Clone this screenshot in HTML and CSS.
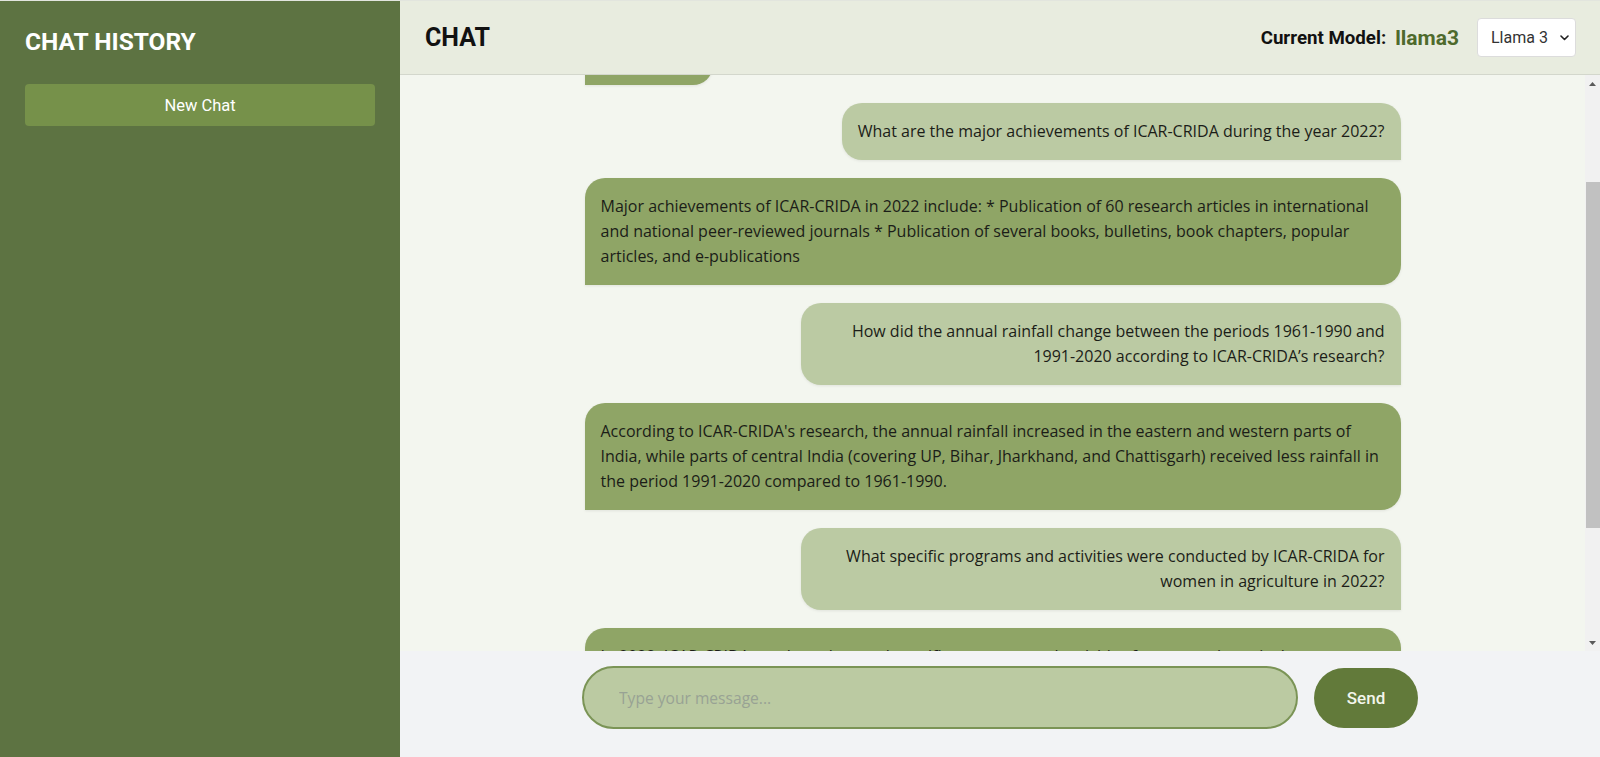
FILE: index.html
```html
<!DOCTYPE html>
<html lang="en">
<head>
<meta charset="utf-8">
<title>Chat</title>
<link rel="stylesheet" href="styles.css">
</head>
<body>
  <aside class="sidebar">
    <h2 class="sidebar-title">CHAT HISTORY</h2>
    <button class="new-chat" type="button">New Chat</button>
  </aside>
  <main class="main">
    <header class="topbar">
      <h1 class="topbar-title">CHAT</h1>
      <div class="model">
        <span class="model-label">Current Model:</span>
        <span class="model-name">llama3</span>
        <span class="select-wrap">
          <select class="model-select">
            <option>Llama 3</option>
          </select>
          <svg class="select-chevron" width="9" height="6" viewBox="0 0 9 6"><path d="M1 1l3.5 3.5L8 1" fill="none" stroke="#222" stroke-width="1.6" stroke-linecap="round" stroke-linejoin="round"/></svg>
        </span>
      </div>
    </header>
    <section class="chat">
      <div class="viewport">
        <div class="thread">
          <div class="msg bot">Hi! Ask away.</div>
          <div class="msg user">What are the major achievements of ICAR-CRIDA during the year 2022?</div>
          <div class="msg bot">Major achievements of ICAR-CRIDA in 2022 include: * Publication of 60 research articles in international and national peer-reviewed journals * Publication of several books, bulletins, book chapters, popular articles, and e-publications</div>
          <div class="msg user">How did the annual rainfall change between the periods 1961-1990 and 1991-2020 according to ICAR-CRIDA’s research?</div>
          <div class="msg bot">According to ICAR-CRIDA's research, the annual rainfall increased in the eastern and western parts of India, while parts of central India (covering UP, Bihar, Jharkhand, and Chattisgarh) received less rainfall in the period 1991-2020 compared to 1961-1990.</div>
          <div class="msg user">What specific programs and activities were conducted by ICAR-CRIDA for women in agriculture in 2022?</div>
          <div class="msg bot">In 2022, ICAR-CRIDA conducted several specific programs and activities for women in agriculture, including trainings, demonstrations and exposure visits for farm women.</div>
        </div>
      </div>
      <div class="scrollbar">
        <div class="sb-btn"><svg width="7" height="4" viewBox="0 0 7 4"><path d="M0 4L3.5 0L7 4z" fill="#5a5a5a"/></svg></div>
        <div class="sb-track"><div class="sb-thumb"></div></div>
        <div class="sb-btn"><svg width="7" height="4" viewBox="0 0 7 4"><path d="M0 0L3.5 4L7 0z" fill="#5a5a5a"/></svg></div>
      </div>
    </section>
    <footer class="composer">
      <input class="composer-input" type="text" placeholder="Type your message...">
      <button class="send" type="button">Send</button>
    </footer>
  </main>
</body>
</html>
```

FILE: styles.css
```css
* { box-sizing: border-box; }

html, body {
  margin: 0;
  height: 100%;
}

body {
  display: flex;
  height: 757px;
  overflow: hidden;
  border-top: 1px solid #e2e5de;
  font-family: Roboto, "Liberation Sans", Arial, sans-serif;
  color: #111;
}

/* Sidebar */
.sidebar {
  flex: none;
  width: 400px;
  background: #5d7342;
  padding: 27px 25px;
  display: flex;
  flex-direction: column;
}

.sidebar-title {
  margin: 0 0 28px;
  font-size: 24.5px;
  font-weight: 700;
  color: #ffffff;
  line-height: 28px;
}

.new-chat {
  height: 42px;
  width: 100%;
  border: none;
  border-radius: 4px;
  background: #76914a;
  color: #ffffff;
  font-family: Roboto, "Liberation Sans", sans-serif;
  font-size: 16.5px;
}

/* Main */
.main {
  flex: 1;
  min-width: 0;
  display: flex;
  flex-direction: column;
}

.topbar {
  flex: none;
  height: 74px;
  background: #e8ecdf;
  border-bottom: 1px solid #d3d7cc;
  display: flex;
  align-items: center;
  justify-content: space-between;
  padding: 0 24px 0 25px;
}

.topbar-title {
  margin: 0;
  font-size: 25px;
  font-weight: 700;
  color: #111;
}

.model {
  display: flex;
  align-items: center;
}

.model-label {
  font-size: 18.7px;
  font-weight: 700;
  color: #111;
}

.model-name {
  margin-left: 9px;
  font-size: 21px;
  font-weight: 700;
  color: #4e6a2c;
}

.select-wrap {
  position: relative;
  margin-left: 18px;
  display: inline-flex;
}

.model-select {
  appearance: none;
  -webkit-appearance: none;
  width: 99px;
  height: 39px;
  padding: 0 26px 0 13px;
  border: 1px solid #dcdcdc;
  border-radius: 4px;
  background: #ffffff;
  font-family: Roboto, "Liberation Sans", sans-serif;
  font-size: 16px;
  color: #333;
}

.select-chevron {
  position: absolute;
  right: 7px;
  top: 17px;
  pointer-events: none;
}

/* Chat */
.chat {
  flex: 1;
  min-height: 0;
  display: flex;
  background: #f3f6ef;
}

.viewport {
  flex: 1;
  min-width: 0;
  overflow: hidden;
}

.thread {
  width: 816px;
  margin: -47px auto 0;
  display: flex;
  flex-direction: column;
  gap: 18px;
}

.msg {
  padding: 16px;
  font-family: "Open Sans", "Noto Sans", sans-serif;
  font-size: 16px;
  line-height: 25px;
  color: #1b1d18;
  box-shadow: 0 1px 3px rgba(0, 0, 0, 0.08);
}

.msg.bot {
  align-self: flex-start;
  max-width: 100%;
  background: #8fa566;
  border-radius: 20px 20px 20px 0;
}

.msg.user {
  align-self: flex-end;
  max-width: 600px;
  text-align: right;
  background: #bbcaa3;
  border-radius: 20px 20px 0 20px;
}

/* Fake classic scrollbar */
.scrollbar {
  flex: none;
  width: 15px;
  background: #f1f1f1;
  display: flex;
  flex-direction: column;
}

.sb-btn {
  flex: none;
  height: 17px;
  display: flex;
  align-items: center;
  justify-content: center;
}

.sb-track {
  flex: 1;
  padding: 0 0 0 1px;
}

.sb-thumb {
  margin-top: 90px;
  height: 346px;
  background: #c1c1c1;
}

/* Composer */
.composer {
  flex: none;
  height: 106px;
  background: #f2f3f5;
  display: flex;
  justify-content: center;
  align-items: flex-start;
  gap: 16px;
  padding-top: 15px;
}

.composer-input {
  width: 716px;
  height: 63px;
  border: 2px solid #7b9456;
  border-radius: 32px;
  background: #bbcaa2;
  padding: 0 35px;
  font-family: "Open Sans", "Noto Sans", sans-serif;
  font-size: 15.6px;
  color: #222;
  outline: none;
}

.composer-input::placeholder {
  color: #98a294;
}

.send {
  width: 104px;
  height: 60px;
  margin-top: 2px;
  border: none;
  border-radius: 30px;
  background: #627a3a;
  color: #f3f6ec;
  font-family: Roboto, "Liberation Sans", sans-serif;
  font-size: 17px;
  font-weight: 500;
}
```
